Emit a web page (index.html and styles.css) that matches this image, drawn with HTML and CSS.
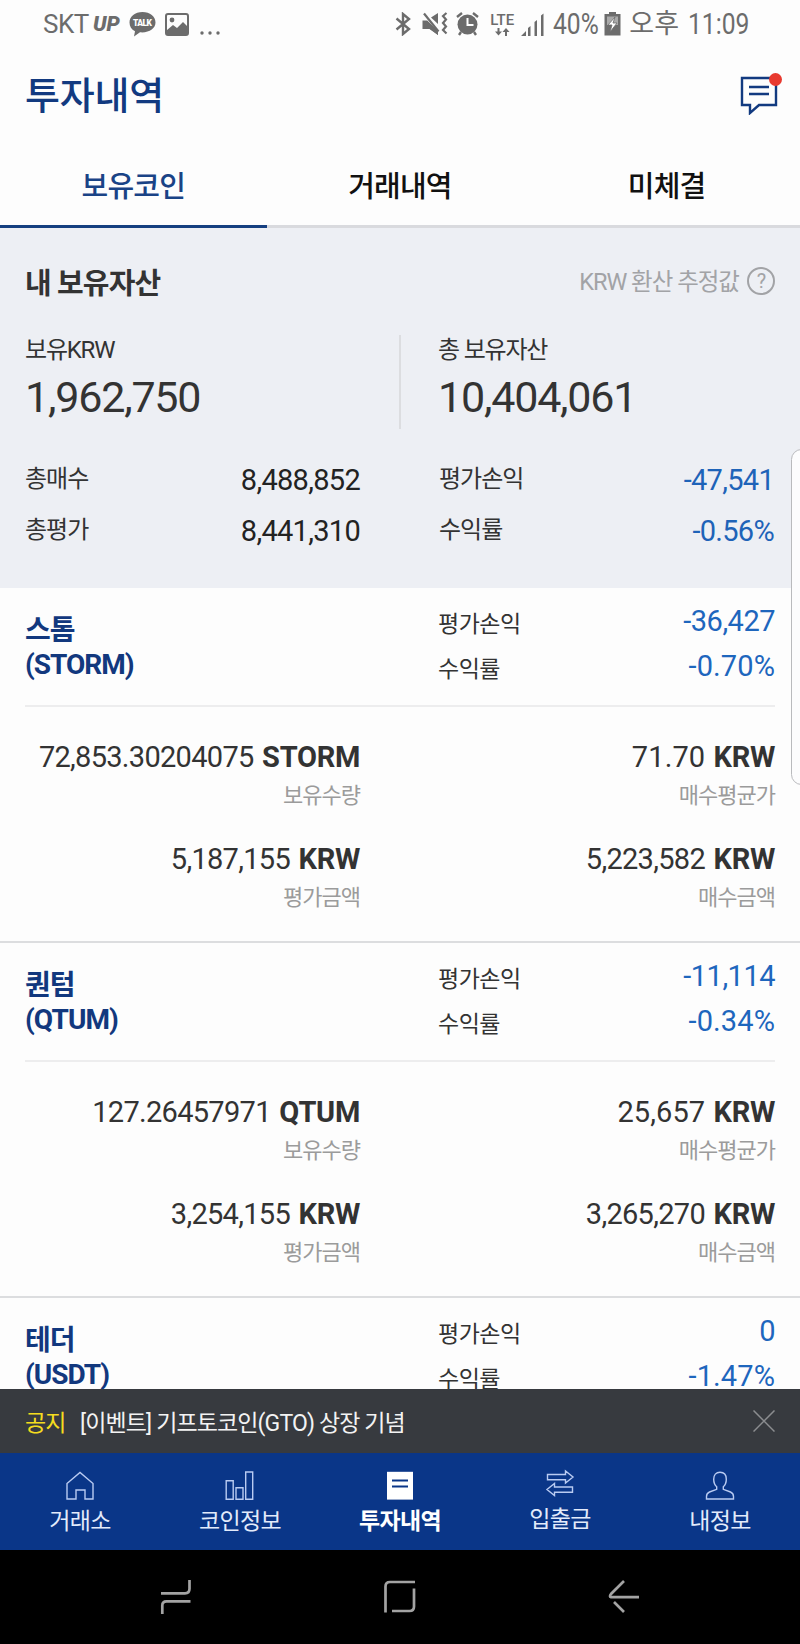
FILE: index.html
```html
<!DOCTYPE html>
<html lang="ko">
<head>
    <meta charset="UTF-8">
    <meta name="viewport" content="width=device-width, initial-scale=1.0">
    <title>투자내역</title>
    <link rel="stylesheet" href="styles.css">
</head>
<body>

<div class="app">

    <!-- phone status bar -->
    <div class="status">
        <div class="status-left">
            <span class="carrier">SKT</span>
            <span class="up">UP</span>
            <svg class="i-talk" width="27" height="25" viewBox="0 0 27 25">
                <path d="M13.500 0C6 0 .5 4.500 .5 10.500c0 4 2 7 5.500 8.700L5 24.500l6-4.200c9 .8 15.500-3.800 15.500-9.800C26.500 4.500 21 0 13.500 0z" fill="#6c6c6c"/>
                <text x="13.500" y="14.300" text-anchor="middle" textLength="19" class="talk-text">TALK</text>
            </svg>
            <svg class="i-pic" width="24" height="23" viewBox="0 0 24 23">
                <path d="M3 1h18q2 0 2 2v17q0 2-2 2H3q-2 0-2-2V3q0-2 2-2z" fill="none" stroke="#6c6c6c" stroke-width="2"/>
                <path d="M2 17l6-5 4 3 6-6 4 4v8H2z" fill="#6c6c6c"/>
                <circle cx="7" cy="7" r="2.400" fill="#6c6c6c"/>
            </svg>
            <svg class="i-dots" width="20" height="4" viewBox="0 0 20 4" fill="#6c6c6c">
                <circle cx="2" cy="2" r="1.700"/><circle cx="10" cy="2" r="1.700"/><circle cx="18" cy="2" r="1.700"/>
            </svg>
        </div>
        <div class="status-right">
            <svg class="i-bt" width="17" height="24" viewBox="0 0 17 24" fill="none" stroke="#6c6c6c" stroke-width="2.400">
                <path d="M1.500 6.500L14 17l-6 5V2l6 5L1.500 17.500"/>
            </svg>
            <svg class="i-mute" width="26" height="24" viewBox="0 0 26 24">
                <path d="M.5 8.500H5L16 19v4l-8.500-6h-7zM9 5.500L16 1v11z" fill="#6c6c6c"/>
                <path d="M5 8.500l11 11V23l-8-6H5z" fill="#6c6c6c"/>
                <path d="M2 1.500l14.500 18" stroke="#6c6c6c" stroke-width="2.200"/>
                <path d="M24.500 1l-3.500 3 3 3.500-3 3.500 3 3.500-3 3.500 3.500 3.500" fill="none" stroke="#6c6c6c" stroke-width="2.200"/>
            </svg>
            <svg class="i-alarm" width="23" height="24" viewBox="0 0 23 24">
                <circle cx="11.500" cy="12.500" r="10" fill="#6c6c6c"/>
                <path d="M1 5l5-4M22 5l-5-4M5 20l-2 3M18 20l2 3" stroke="#6c6c6c" stroke-width="2.400"/>
                <path d="M11.500 6v7h6" fill="none" stroke="#fff" stroke-width="2"/>
            </svg>
            <div class="i-lte">
                <span>LTE</span>
                <svg width="25" height="8" viewBox="0 0 25 8">
                    <path d="M8.500 0v5M16 8V3" stroke="#6c6c6c" stroke-width="2"/>
                    <path d="M5 3.500h7l-3.500 4zM12.500 4h7L16 0z" fill="#6c6c6c"/>
                </svg>
            </div>
            <svg class="i-signal" width="24" height="23" viewBox="0 0 24 23" fill="#6c6c6c">
                <path d="M0 23l5-5v5zM7 15l2.500-2v10H7zM13.500 9L16 7v16h-2.500zM20 2.500l2.500-2V23H20z"/>
            </svg>
            <span class="battery-num">40%</span>
            <svg class="i-battery" width="17" height="24" viewBox="0 0 17 24">
                <path d="M5 0h7v2h4.500v21.500H.5V2H5z" fill="#6c6c6c"/>
                <path d="M3 4.500h11V13H3z" fill="#aaa"/>
                <path d="M11 5l-7 8h4l-2 7 7-9H9z" fill="#fff" stroke="#6c6c6c" stroke-width=".8"/>
            </svg>
            <span class="ampm">오후</span>
            <span class="clock">11:09</span>
        </div>
    </div>

    <!-- title -->
    <div class="header">
        <h1>투자내역</h1>
        <svg class="msg" width="42" height="43" viewBox="0 0 42 43">
            <path d="M2 6h34v27H19l-9 8v-8H2z" fill="none" stroke="#123a80" stroke-width="2.400"/>
            <path d="M9 15h20M9 22h20" stroke="#123a80" stroke-width="2.400"/>
            <circle cx="35.500" cy="7.500" r="6.500" fill="#e8392f"/>
        </svg>
    </div>

    <div class="tabs">
        <div class="tab active">보유코인</div>
        <div class="tab">거래내역</div>
        <div class="tab">미체결</div>
    </div>

    <!-- my assets -->
    <div class="summary">
        <div class="summary-head">
            <h2>내 보유자산</h2>
            <div class="note">
                <span class="note-text">KRW 환산 추정값</span>
                <span class="help">?</span>
            </div>
        </div>
        <div class="totals">
            <div class="total">
                <p>보유KRW</p>
                <strong>1,962,750</strong>
            </div>
            <div class="total">
                <p>총 보유자산</p>
                <strong>10,404,061</strong>
            </div>
        </div>
        <div class="sums">
            <div class="sum"><span>총매수</span><b>8,488,852</b></div>
            <div class="sum"><span>평가손익</span><b class="minus">-47,541</b></div>
            <div class="sum"><span>총평가</span><b>8,441,310</b></div>
            <div class="sum"><span>수익률</span><b class="minus">-0.56%</b></div>
        </div>
    </div>

    <!-- coins -->
    <div class="coins">
        <div class="coin">
            <div class="coin-head">
                <h3>스톰<br>(STORM)</h3>
                <div class="profit">
                    <div class="row"><span>평가손익</span><b>-36,427</b></div>
                    <div class="row"><span>수익률</span><b class="rate">-0.70%</b></div>
                </div>
            </div>
            <div class="coin-body">
                <div class="cell"><p>72,853.30204075 <b>STORM</b></p><small>보유수량</small></div>
                <div class="cell avg"><p>71.70 <b>KRW</b></p><small>매수평균가</small></div>
                <div class="cell"><p>5,187,155 <b>KRW</b></p><small>평가금액</small></div>
                <div class="cell"><p>5,223,582 <b>KRW</b></p><small>매수금액</small></div>
            </div>
        </div>

        <div class="coin">
            <div class="coin-head">
                <h3>퀀텀<br>(QTUM)</h3>
                <div class="profit">
                    <div class="row"><span>평가손익</span><b>-11,114</b></div>
                    <div class="row"><span>수익률</span><b class="rate">-0.34%</b></div>
                </div>
            </div>
            <div class="coin-body">
                <div class="cell"><p>127.26457971 <b>QTUM</b></p><small>보유수량</small></div>
                <div class="cell avg"><p>25,657 <b>KRW</b></p><small>매수평균가</small></div>
                <div class="cell"><p>3,254,155 <b>KRW</b></p><small>평가금액</small></div>
                <div class="cell"><p>3,265,270 <b>KRW</b></p><small>매수금액</small></div>
            </div>
        </div>

        <div class="coin">
            <div class="coin-head">
                <h3>테더<br>(USDT)</h3>
                <div class="profit">
                    <div class="row"><span>평가손익</span><b>0</b></div>
                    <div class="row"><span>수익률</span><b class="rate">-1.47%</b></div>
                </div>
            </div>
        </div>
    </div>

    <div class="notice">
        <span class="notice-tag">공지</span>
        <span class="notice-text">[이벤트] 기프토코인(GTO) 상장 기념</span>
        <svg width="22" height="22" viewBox="0 0 22 22" stroke="#8b8d90" stroke-width="1.500">
            <path d="M.5 .5l21 21M21.500 .5l-21 21"/>
        </svg>
    </div>

    <div class="nav">
        <div class="nav-item">
            <svg width="30" height="30" viewBox="0 0 30 30" fill="none" stroke="#b9cbf2" stroke-width="1.400">
                <path d="M2 12.500L15 1.500l13 11V28h-8v-9h-9v9H2z"/>
            </svg>
            <span>거래소</span>
        </div>
        <div class="nav-item">
            <svg width="30" height="30" viewBox="0 0 30 30" fill="none" stroke="#b9cbf2" stroke-width="1.400">
                <path d="M1.200 9.700h7v18.500h-7zM11 16.700h7v11.500h-7zM20.700 1h7v27.200h-7z"/>
            </svg>
            <span>코인정보</span>
        </div>
        <div class="nav-item on">
            <svg width="30" height="30" viewBox="0 0 30 30">
                <path d="M2 .8h26v27.800H2z" fill="#fff"/>
                <path d="M7 9.500h16M7 15.500h16" stroke="#0a3688" stroke-width="2"/>
            </svg>
            <span>투자내역</span>
        </div>
        <div class="nav-item up2">
            <svg width="30" height="30" viewBox="0 0 30 30" fill="none" stroke="#b9cbf2" stroke-width="1.400">
                <path d="M2.500 5.500h18V2L28 8l-7.500 6v-3.300h-18zM27.500 18h-18v-3.500L2 20.500l7.500 6v-3.300h18z"/>
            </svg>
            <span>입출금</span>
        </div>
        <div class="nav-item">
            <svg width="30" height="30" viewBox="0 0 30 30" fill="none" stroke="#b9cbf2" stroke-width="1.400">
                <path d="M15 1.200c-4 0-6.300 2.800-6.300 7 0 3.300 1 5.800 3 7.500v2.600L4.500 21Q1.500 22.300 1.500 25.500V28h27v-2.500q0-3.200-3-4.500l-7.200-2.700v-2.600c2-1.700 3-4.200 3-7.500 0-4.200-2.300-7-6.300-7z"/>
            </svg>
            <span>내정보</span>
        </div>
    </div>

    <!-- android keys -->
    <div class="keys">
        <svg width="32" height="36" viewBox="0 0 32 36" fill="none" stroke="#a3a3a3" stroke-width="2.700">
            <path d="M1 14.300h24q4.500 0 4.500-4.500V1M30.500 22.300h-24Q2.300 22.300 2.300 26.500V35"/>
        </svg>
        <svg width="32" height="36" viewBox="0 0 32 36" fill="none" stroke="#a3a3a3" stroke-width="2.700">
            <path d="M1.500 33.500V7.500q0-4.500 4.500-4.500h25M30 9.500v18q0 4.500-4.500 4.500H8"/>
        </svg>
        <svg width="32" height="36" viewBox="0 0 32 36" fill="none" stroke="#a3a3a3" stroke-width="2.700">
            <path d="M16 2L3 15Q1 17.700 3 18.200H31M6 23l10 10"/>
        </svg>
    </div>

    <div class="edge"></div>
</div>

</body>
</html>
```

FILE: styles.css
```css
* {
    box-sizing: border-box;
}
body {
    margin: 0;
    font-family: Roboto, 'Noto Sans CJK KR', sans-serif;
    color: #333;
    background: #fdfdfd;
}
h1, h2, h3, p {
    margin: 0;
}
svg {
    display: block;
    flex: none;
}
.app {
    position: relative;
    width: 800px;
    height: 1644px;
    overflow: hidden;
    display: flex;
    flex-direction: column;
}

/* status bar */
.status {
    height: 48px;
    display: flex;
    justify-content: space-between;
    padding: 0 51px 0 43px;
    color: #6c6c6c;
    line-height: 48px;
    white-space: nowrap;
}
.status-left, .status-right {
    display: flex;
    align-items: center;
}
.carrier {
    width: 50px;
    font-size: 26px;
    letter-spacing: -0.5px;
    line-height: 46px;
}
.up {
    width: 28px;
    font-size: 21px;
    font-weight: 900;
    font-style: italic;
}
.i-talk {
    margin: 0 9px 0 8px;
}
.talk-text {
    font-size: 8.5px;
    font-weight: 900;
    fill: #fff;
}
.i-dots {
    margin: 17px 0 0 11px;
}
.i-mute {
    margin-left: 10px;
}
.i-alarm {
    margin-left: 8px;
}
.i-lte {
    width: 25px;
    margin-left: 11px;
    font-size: 15px;
    font-weight: 500;
    line-height: 16px;
}
.i-lte span {
    display: block;
}
.i-signal {
    margin-left: 6px;
}
.battery-num, .clock {
    font-size: 29px;
    transform: scaleX(0.85);
    transform-origin: left;
}
.battery-num {
    width: 46px;
    margin-left: 8px;
}
.i-battery {
    margin-left: 5px;
}
.ampm {
    font-size: 27px;
    margin: 0 9px 0 8px;
}
.clock {
    width: 61px;
}

/* title */
.header {
    height: 97px;
    padding: 0 18px 8px 25px;
    display: flex;
    justify-content: space-between;
    align-items: center;
}
h1 {
    font-size: 38px;
    font-weight: 500;
    letter-spacing: -0.2px;
    color: #123a80;
}
.msg {
    margin-top: 2px;
}
.tabs {
    display: flex;
    height: 83px;
    border-bottom: 3px solid #d9dade;
}
.tab {
    flex: 1;
    height: 83px;
    line-height: 84px;
    text-align: center;
    font-size: 29px;
    letter-spacing: -0.8px;
    font-weight: 500;
    color: #111;
}
.tab.active {
    color: #1a4386;
    border-bottom: 3px solid #153f80;
}

/* my assets */
.summary {
    height: 360px;
    padding: 25px 25px 0;
    background: #edeff4;
}
.summary-head {
    display: flex;
    justify-content: space-between;
    align-items: center;
    height: 56px;
}
h2 {
    font-size: 29px;
    font-weight: 700;
    letter-spacing: -0.9px;
}
.note {
    display: flex;
    align-items: center;
    gap: 8px;
    font-size: 23.5px;
    line-height: 30px;
    letter-spacing: -1px;
    color: #a2a3a6;
}
.note-text {
    margin-top: 2px;
}
.help {
    width: 28px;
    height: 28px;
    border: 2px solid #a2a3a6;
    border-radius: 50%;
    font-size: 20px;
    line-height: 25px;
    text-align: center;
}
.totals {
    display: grid;
    grid-template-columns: 374px 1fr;
    margin-top: 26px;
    height: 94px;
}
.total + .total {
    border-left: 2px solid #dcdde0;
    padding-left: 37px;
}
.total p {
    font-size: 24px;
    line-height: 30px;
    letter-spacing: -1.2px;
}
.total strong {
    display: block;
    margin-top: 8px;
    font-size: 43px;
    line-height: 48px;
    font-weight: 400;
    letter-spacing: -1.2px;
}
.sums {
    display: grid;
    grid-template-columns: 335px 335px;
    column-gap: 79px;
    margin-top: 25px;
}
.sum {
    display: flex;
    justify-content: space-between;
    height: 51px;
    line-height: 51px;
    font-size: 24px;
    letter-spacing: -1px;
}
.sum b {
    font-size: 29px;
    font-weight: 400;
    letter-spacing: -0.7px;
    margin-top: 1px;
    color: #222;
}
.sum b.minus {
    color: #1e63b8;
}

/* coins */
.coins {
    height: 801px;
    overflow: hidden;
}
.coin {
    height: 355px;
    border-bottom: 2px solid #dcdddf;
}
.coin-head {
    display: flex;
    justify-content: space-between;
    height: 119px;
    margin: 0 25px;
    border-bottom: 2px solid #ededee;
}
h3 {
    margin-top: 26px;
    font-size: 28px;
    line-height: 34px;
    font-weight: 700;
    letter-spacing: -1px;
    color: #12387e;
}
.profit {
    width: 337px;
    margin-top: 10px;
}
.row {
    display: flex;
    justify-content: space-between;
    height: 45px;
    line-height: 46px;
}
.row span {
    margin-top: 4px;
    font-size: 23px;
    letter-spacing: -0.5px;
}
.row b {
    font-size: 29px;
    font-weight: 400;
    letter-spacing: -0.5px;
    color: #1e66bd;
}
.row b.rate {
    letter-spacing: 0.1px;
}
.coin-body {
    display: grid;
    grid-template-columns: 335px 336px;
    column-gap: 79px;
    margin: 0 25px;
    padding-top: 30px;
}
.cell {
    height: 102px;
    text-align: right;
}
.cell p {
    font-size: 29px;
    line-height: 41px;
    letter-spacing: -0.7px;
    white-space: nowrap;
}
.cell.avg p {
    letter-spacing: 0.1px;
}
.cell p b {
    margin-left: 2px;
    letter-spacing: -0.3px;
}
.cell.avg p b {
    margin-left: 1px;
}
.cell small {
    display: block;
    font-size: 22px;
    line-height: 36px;
    letter-spacing: -1px;
    color: #9b9b9b;
}

/* notice */
.notice {
    display: flex;
    align-items: center;
    height: 64px;
    padding: 0 25px;
    background: #373a3f;
    color: #f3f3f3;
    font-size: 23px;
    letter-spacing: -0.87px;
}
.notice-tag {
    width: 55px;
    color: #f5dc1e;
}
.notice svg {
    margin-left: auto;
}

/* bottom menu */
.nav {
    display: flex;
    height: 97px;
    background: #0a3688;
}
.nav-item {
    flex: 1;
    display: flex;
    flex-direction: column;
    align-items: center;
    padding-top: 18px;
    font-size: 23px;
    letter-spacing: -0.7px;
    line-height: 30px;
    color: #e3ebfb;
}
.nav-item span {
    margin-top: 6px;
}
.nav-item.on {
    color: #fff;
    font-weight: 700;
}
.nav-item.up2 {
    padding-top: 16px;
}
.keys {
    display: flex;
    justify-content: center;
    gap: 192px;
    height: 94px;
    padding-top: 29px;
    background: #000;
}

/* edge panel handle */
.edge {
    position: absolute;
    top: 449px;
    right: -12px;
    width: 21px;
    height: 336px;
    background: #fcfcfd;
    border: 1.5px solid #b9babd;
    border-radius: 12px;
}
```
